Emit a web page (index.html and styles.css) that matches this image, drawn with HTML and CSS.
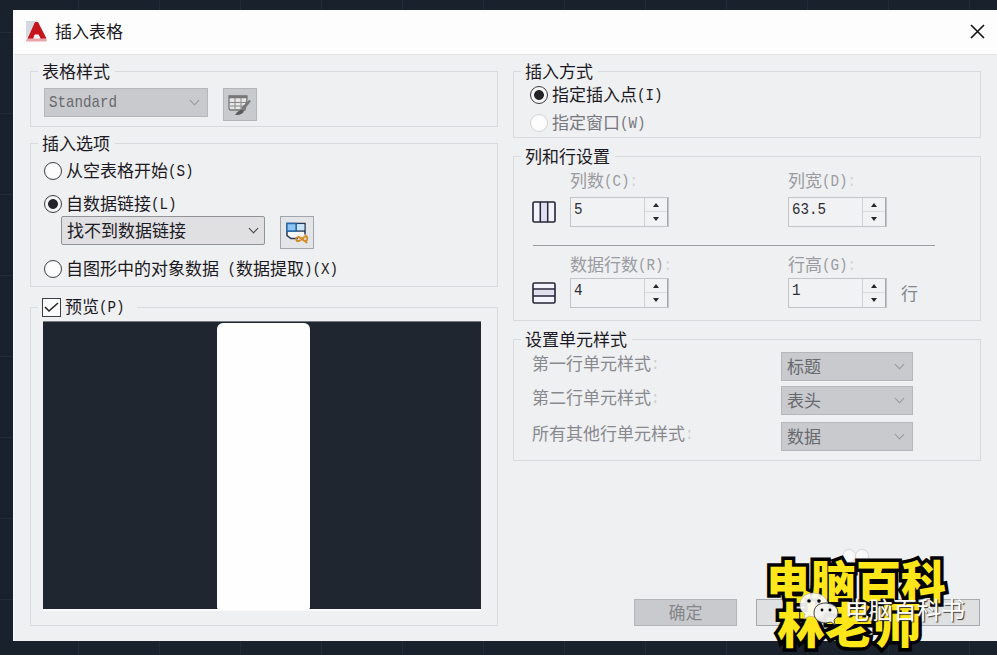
FILE: index.html
```
<!DOCTYPE html>
<html lang="zh-CN">
<head>
  <meta charset="UTF-8">
  <title>插入表格</title>
  <link rel="stylesheet" href="styles.css">
</head>
<body>
  <div class="dialog">
    <header class="titlebar">
      <svg class="logo" width="21" height="22" viewBox="0 0 21 22">
        <path d="M0 1h11L0 19z" fill="#d5d9e3"/>
        <path d="M0 20.500L3 16h14l4 4-1 1.500H0z" fill="#e9a5a8"/>
        <path d="M1.500 18.500L9 2h3l8.500 16.500h-6L12.500 15h-4L7 18.500z" fill="#c5161d"/>
        <path d="M8 8h5l2 7H7z" fill="#c5161d"/>
        <path d="M9 14.500h3.500l2 4H7.500z" fill="#fff"/>
      </svg>
      <span class="title">插入表格</span>
      <svg class="close" width="15" height="15" viewBox="0 0 15 15"><path d="M1 1l13 13M14 1L1 14" stroke="#111" stroke-width="1.6"/></svg>
    </header>

    <main class="content">
      <div class="column">
        <section class="group style-group">
          <div class="legend">表格样式</div>
          <div class="row style-row">
            <div class="select disabled style-select"><span class="en">Standard</span><i class="arrow"></i></div>
            <div class="icon-btn disabled">
              <svg width="26" height="24" viewBox="0 0 26 24">
                <path d="M2 3h18v3l-2 11H4q-2 0-2-2z" fill="#e6e6e8" stroke="#777" stroke-width="1.3"/>
                <path d="M2 4h18" stroke="#777" stroke-width="2.500"/>
                <path d="M2 9.500h18M3 13h15M8 5v12M14 5v11" stroke="#888"/>
                <path d="M24 8l-7 9-3-2 8-8z" fill="#777"/>
                <path d="M8 22q4-6 8-5.500 2 2-1 4-3 2-7 1.500z" fill="#5c5c5e"/>
              </svg>
            </div>
          </div>
        </section>

        <section class="group option-group">
          <div class="legend">插入选项</div>
          <div class="radio opt-empty"><i class="dot"></i><span>从空表格开始<b class="en">(S)</b></span></div>
          <div class="radio opt-link"><i class="dot checked"></i><span>自数据链接<b class="en">(L)</b></span></div>
          <div class="row link-row">
            <div class="select link-select"><span>找不到数据链接</span><i class="arrow"></i></div>
            <div class="icon-btn">
              <svg width="24" height="24" viewBox="0 0 24 24">
                <path d="M2 2.500h18v11l-6 4H6l-4-3z" fill="#f6f8fc"/>
                <path d="M13 17.500H6l-4-3v-12h18v11M2 10h18M11 3v7" fill="none" stroke="#263957" stroke-width="1.5"/>
                <path d="M2 10h9V2.500H2z" fill="#8ec5f3" stroke="#236cb0" stroke-width="1.3"/>
                <path d="M12 3.200h7.300v6H12z" fill="#c9e3f8"/>
                <path d="M12 20q-2-3 1-4 2 0 4 2t4 2q2-1 1-4-2-1-4 1t-4 3zM20 14l2 2M20 20l2 2" fill="none" stroke="#d58a24" stroke-width="1.8"/>
              </svg>
            </div>
          </div>
          <div class="radio opt-extract"><i class="dot"></i><span>自图形中的对象数据<b class="en"> (</b>数据提取<b class="en">)(X)</b></span></div>
        </section>

        <section class="group preview-group">
          <div class="legend preview-legend">
            <i class="checkbox"><svg width="15" height="13" viewBox="0 0 15 13"><path d="M1 6l4 4 9-8" fill="none" stroke="#222" stroke-width="1.5"/></svg></i>
            <span>预览<b class="en">(P)</b></span>
          </div>
          <div class="preview"><div class="preview-table"></div></div>
        </section>
      </div>

      <div class="column">
        <section class="group method-group">
          <div class="legend">插入方式</div>
          <div class="radio method-point"><i class="dot checked"></i><span>指定插入点<b class="en">(I)</b></span></div>
          <div class="radio method-window disabled"><i class="dot"></i><span>指定窗口<b class="en">(W)</b></span></div>
        </section>

        <section class="group size-group">
          <div class="legend">列和行设置</div>
          <div class="size-grid">
            <label class="num-label first">列数<b class="en">(C)</b><b class="en faint">:</b></label>
            <label class="num-label">列宽<b class="en">(D)</b><b class="en faint">:</b></label>
            <svg class="size-icon" width="24" height="22" viewBox="0 0 24 22">
              <rect x="1" y="1" width="22" height="20" rx="1.5" fill="#f3f3fb" stroke="#25253a" stroke-width="1.6"/>
              <path d="M12 2v18" stroke="#e0e0f2" stroke-width="6"/>
              <path d="M8.300 1v20M15.700 1v20" stroke="#25253a" stroke-width="1.5"/>
            </svg>
            <div class="spin"><span class="en">5</span><i class="steps"></i></div>
            <div class="spin"><span class="en">63.5</span><i class="steps"></i></div>
          </div>
          <div class="rule"></div>
          <div class="size-grid">
            <label class="num-label first">数据行数<b class="en">(R)</b><b class="en faint">:</b></label>
            <label class="num-label">行高<b class="en">(G)</b><b class="en faint">:</b></label>
            <svg class="size-icon" width="24" height="22" viewBox="0 0 24 22">
              <rect x="1" y="1" width="22" height="20" rx="1.5" fill="#f3f3fb" stroke="#25253a" stroke-width="1.6"/>
              <path d="M2 11h20" stroke="#e0e0ee" stroke-width="6"/>
              <path d="M1 7h22M1 14h22" stroke="#25253a" stroke-width="1.5"/>
            </svg>
            <div class="spin"><span class="en">4</span><i class="steps"></i></div>
            <div class="spin"><span class="en">1</span><i class="steps"></i></div>
            <span class="unit">行</span>
          </div>
        </section>

        <section class="group cell-group">
          <div class="legend">设置单元样式</div>
          <div class="cell-row"><span>第一行单元样式<b class="en faint">:</b></span><div class="select disabled cell-select"><span>标题</span><i class="arrow"></i></div></div>
          <div class="cell-row"><span>第二行单元样式<b class="en faint">:</b></span><div class="select disabled cell-select"><span>表头</span><i class="arrow"></i></div></div>
          <div class="cell-row last"><span>所有其他行单元样式<b class="en faint">:</b></span><div class="select disabled cell-select"><span>数据</span><i class="arrow"></i></div></div>
        </section>

        <footer class="buttons">
          <div class="button disabled">确定</div>
          <div class="button wide"></div>
        </footer>
      </div>
    </main>
  </div>

  <svg class="paw" width="32" height="18" viewBox="0 0 32 18">
    <g fill="#f8f8f8" stroke="#d6d6d8"><circle cx="10" cy="8" r="6.500"/><circle cx="23" cy="8" r="6.500"/></g>
  </svg>
  <div class="stamp">
    <div>电脑百科</div>
    <div class="second">林老师</div>
  </div>
  <div class="account">
    <svg width="40" height="34" viewBox="0 0 40 34">
      <path d="M15 1C6 1 1 6 1 13q0 6 5 9l-1 5 5-3 6 1q13-1 13-12Q28 2 15 1z" fill="#fff" fill-opacity=".9" stroke="#aaa" stroke-width=".6"/>
      <path d="M27 11c-8 0-12 4-12 10s5 10 12 10l5-1 4 3-1-5q4-3 4-7 0-9-12-10z" fill="#f4f4f4" fill-opacity=".94" stroke="#444"/>
      <circle cx="10" cy="9" r="1.8"/><circle cx="20" cy="9" r="1.8"/><circle cx="23" cy="18" r="1.4"/><circle cx="31" cy="18" r="1.4"/>
    </svg>
    <span>电脑百科书</span>
  </div>
</body>
</html>
```
FILE: styles.css
```
* {
  box-sizing: border-box;
}

body {
  margin: 0;
  padding: 10px 0 0 13px;
  width: 997px;
  height: 655px;
  overflow: hidden;
  position: relative;
  background-color: #19212c;
  background-image:
    linear-gradient(90deg, #222b37 1px, transparent 1px),
    linear-gradient(#222b37 1px, transparent 1px);
  background-size: 81px 81px;
  background-position: 78px 32px;
  font-family: "Noto Sans CJK SC", sans-serif;
  font-size: 17px;
  line-height: 20px;
  color: #1b1923;
  white-space: nowrap;
}

/* half-width latin next to the full-width characters */
.en {
  display: inline-block;
  font-family: "Liberation Mono", monospace;
  font-size: 14.2px;
  font-weight: normal;
  white-space: pre;
  transform: scaleY(1.15);
}

b.en {
  transform: translateY(-2px) scaleY(1.15);
}

.faint {
  opacity: 0.35;
}

.dialog {
  height: 631px;
  background: #eff0f2;
  border-left: 1px solid #fafafc;
}

.titlebar {
  height: 45px;
  padding: 0 12px 2px 12px;
  display: flex;
  align-items: center;
  background: #fdfdfe;
  border-bottom: 1px solid #e4e5e7;
}

.title {
  margin-left: 8px;
}

.close {
  margin-left: auto;
}

.content {
  display: flex;
  gap: 15px;
  padding: 16px 16px 0;
}

.column {
  width: 468px;
  display: flex;
  flex-direction: column;
}

.group {
  border: 1px solid #d9dadd;
  display: flex;
  flex-direction: column;
  align-items: flex-start;
}

.legend {
  height: 20px;
  margin: -11px 0 0 7px;
  padding: 0 5px 0 4px;
  background: #eff0f2;
  flex-shrink: 0;
}

.row {
  display: flex;
  align-items: flex-start;
}

/* left column */
.style-group {
  height: 56px;
  margin-bottom: 16px;
}

.style-row {
  gap: 15px;
  margin: 7px 0 0 13px;
}

.option-group {
  height: 144px;
  margin-bottom: 20px;
}

.preview-group {
  height: 319px;
}

.select {
  height: 29px;
  display: flex;
  align-items: center;
  justify-content: space-between;
  padding: 0 7px 2px 5px;
  border: 1px solid #929397;
  border-radius: 2px;
  background: #e0e0e2;
}

.select.disabled {
  background: #c9cacd;
  border-color: #b6b7ba;
  border-radius: 0;
  color: #68696d;
}

.arrow {
  width: 7px;
  height: 7px;
  margin: -3px 2px 0 0;
  border-right: 1.5px solid #444;
  border-bottom: 1.5px solid #444;
  transform: rotate(45deg);
}

.disabled .arrow {
  border-color: #97989c;
}

.style-select {
  width: 164px;
  padding-left: 4px;
}

.icon-btn {
  width: 34px;
  height: 33px;
  display: flex;
  align-items: center;
  justify-content: center;
  border: 1px solid #a2a7ae;
  background: #e4e5e8;
}

.icon-btn.disabled {
  background: #c9cacd;
  border-color: #b4b5b8;
}

.radio {
  height: 20px;
  display: flex;
  align-items: center;
  gap: 4px;
}

.dot {
  width: 18px;
  height: 18px;
  border: 1.5px solid #3f3f43;
  border-radius: 50%;
  background: #fdfdfd;
}

.dot.checked {
  background: radial-gradient(circle, #242428 4.5px, #f5f5f5 5.3px);
}

.radio.disabled {
  color: #77777d;
}

.radio.disabled .dot {
  border-color: #d2d3d6;
}

.opt-empty {
  margin: 8px 0 0 13px;
}

.opt-link {
  margin: 13px 0 0 13px;
}

.link-row {
  gap: 15px;
  margin: 2px 0 0 30px;
}

.link-select {
  width: 204px;
  padding-right: 5px;
}

.opt-extract {
  margin: 10px 0 0 13px;
}

.preview-legend {
  display: flex;
  align-items: center;
  gap: 4px;
  padding-right: 12px;
}

.checkbox {
  width: 19px;
  height: 19px;
  display: flex;
  align-items: center;
  justify-content: center;
  border: 1.5px solid #3f3f43;
  background: #fbfbfb;
}

.preview {
  width: 438px;
  height: 288px;
  margin: 4px 0 0 12px;
  padding: 1px 0 0 174px;
  background: #1f2630;
  border-top: 1px solid #777b82;
  box-shadow: 0 2px 0 #fafafb;
}

.preview-table {
  width: 93px;
  height: 287px;
  border-radius: 6px 6px 3px 3px;
  background: #fefefe;
}

/* right column */
.method-group {
  height: 67px;
  margin-bottom: 18px;
}

.method-point {
  margin: 4px 0 0 16px;
}

.method-window {
  margin: 8px 0 0 16px;
}

.size-group {
  height: 165px;
  margin-bottom: 18px;
}

.size-grid {
  display: grid;
  grid-template-columns: 38px 218px 98px auto;
  grid-template-rows: 20px 30px;
  row-gap: 6px;
  margin: 5px 0 0 18px;
  align-items: center;
}

.num-label {
  color: #9a9ba0;
}

.num-label.first {
  grid-column: 2;
}

.num-label:not(.first) {
  grid-column: 3 / 5;
}

.spin {
  width: 99px;
  height: 30px;
  display: flex;
  justify-content: space-between;
  padding-left: 3px;
  border: 1px solid #c3c4c7;
  background: #f1f2f4;
}

.spin .en {
  line-height: 25px;
  color: #2e2e36;
}

.steps {
  width: 24px;
  display: flex;
  flex-direction: column;
  align-items: center;
  justify-content: space-around;
  border: 1px solid #a6a7aa;
  border-width: 0 1px 0 1px;
  border-left-color: #cfd0d3;
  background: linear-gradient(transparent 13px, #dadbdd 13px 14px, transparent 14px);
}

.steps::before,
.steps::after {
  content: "";
  border: 3.5px solid transparent;
}

.steps::before {
  border-top: 0;
  border-bottom: 4px solid #26262b;
}

.steps::after {
  border-bottom: 0;
  border-top: 4px solid #26262b;
}

.unit {
  margin-left: 15px;
  color: #85868b;
}

.rule {
  width: 402px;
  height: 1px;
  margin: 18px 0 0 19px;
  background: #9b9da0;
  flex-shrink: 0;
}

.rule + .size-grid {
  row-gap: 3px;
  margin-top: 9px;
}

.cell-group {
  height: 122px;
}

.cell-row {
  width: 381px;
  height: 29px;
  margin: 3px 0 2px 18px;
  display: flex;
  justify-content: space-between;
  color: #88898e;
}

.cell-row > span {
  margin-top: 1px;
}

.cell-row.last {
  margin-top: 5px;
}

.cell-select {
  width: 132px;
}

.buttons {
  display: flex;
  gap: 19px;
  margin: 138px 0 0 121px;
}

.button {
  width: 103px;
  height: 27px;
  line-height: 24px;
  text-align: center;
  border: 1px solid #a9aaad;
  background: #dfe0e2;
}

.button.disabled {
  background: #c9cacd;
  border-color: #b4b5b8;
  color: #85868a;
}

.button.wide {
  width: 224px;
  flex-shrink: 0;
}

/* overlays on top of the dialog */
.paw {
  position: absolute;
  left: 839px;
  top: 548px;
}

.stamp {
  position: absolute;
  left: 766px;
  top: 557px;
  font-size: 45px;
  font-weight: 900;
  line-height: 46px;
  color: #ffe619;
  -webkit-text-stroke: 7px #000;
  paint-order: stroke fill;
}

.stamp .second {
  margin: -4px 0 0 11px;
  font-size: 48px;
  line-height: 46px;
}

.account {
  position: absolute;
  left: 799px;
  top: 592px;
  display: flex;
  align-items: center;
  gap: 6px;
  font-size: 24px;
  line-height: 34px;
  color: #fff;
  text-shadow: 1px 1px 1px #333;
}
```
